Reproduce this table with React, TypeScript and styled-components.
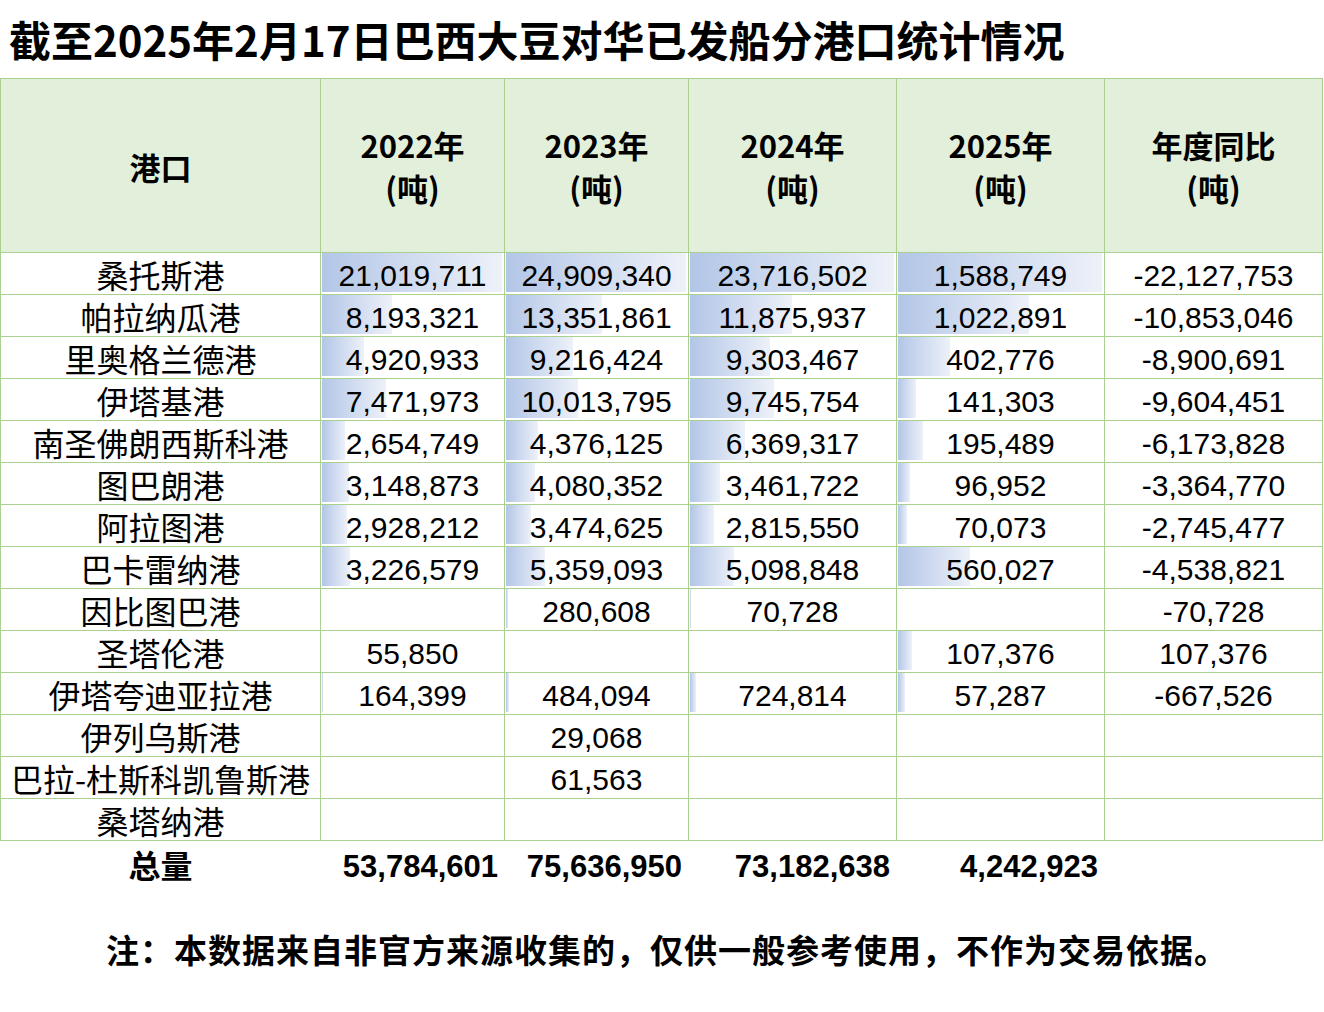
import React from 'react';
import styled, { createGlobalStyle } from 'styled-components';

const cjk = '"Noto Sans CJK SC", "Noto Sans", sans-serif';
const num = '"Liberation Sans", Arial, sans-serif';

const GlobalStyle = createGlobalStyle`
  body {
    margin: 0;
    background: #ffffff;
    color: #000000;
    font-family: ${cjk};
  }
`;

const Page = styled.div`
  width: 1324px;
  min-height: 1012px;
  background: #ffffff;
`;

const Title = styled.h1`
  margin: 0;
  height: 78px;
  line-height: 78px;
  padding-left: 9px;
  font-family: ${cjk};
  font-size: 42px;
  font-weight: 700;
  white-space: nowrap;
`;

const columns = '319px 183px 183px 207px 207px 217px';

const Table = styled.div`
  display: grid;
  grid-template-columns: ${columns};
  grid-template-rows: 173px repeat(14, 41px);
  gap: 1px;
  padding: 1px;
  width: max-content;
  background: #a9d08e;
`;

const HeadCell = styled.div`
  display: flex;
  align-items: center;
  justify-content: center;
  text-align: center;
  background: #e2efda;
  font-family: ${cjk};
  font-size: 31px;
  font-weight: 700;
  line-height: 43px;
  padding-top: 1px;
`;

const NameCell = styled.div`
  display: flex;
  align-items: center;
  justify-content: center;
  background: #ffffff;
  font-family: ${cjk};
  font-size: 32px;
  font-weight: 400;
  white-space: nowrap;
`;

const ValueCell = styled.div`
  position: relative;
  display: flex;
  align-items: center;
  justify-content: center;
  background: #ffffff;
  font-family: ${num};
  font-size: 30px;
  padding-top: 4px;
`;

const Bar = styled.div`
  position: absolute;
  left: 1px;
  top: 0;
  bottom: 2px;
  background: linear-gradient(to right, #b3c6e7, #edf1f9);
`;

const ValueText = styled.span`
  position: relative;
`;

const TotalRow = styled.div`
  display: grid;
  grid-template-columns: ${columns};
  column-gap: 1px;
  padding: 0 1px;
  height: 52px;
  align-items: center;
`;

const TotalLabel = styled.div`
  text-align: center;
  font-family: ${cjk};
  font-size: 32px;
  font-weight: 700;
  padding-bottom: 6px;
`;

const TotalValue = styled.div`
  text-align: right;
  padding-right: 6px;
  font-family: ${num};
  font-size: 31px;
  font-weight: 700;
`;

const Note = styled.p`
  margin: 0;
  padding: 34px 0 0 10px;
  line-height: 44px;
  text-align: center;
  font-family: ${cjk};
  font-size: 33px;
  font-weight: 700;
  letter-spacing: 1px;
`;

type Row = [string, number | null, number | null, number | null, number | null, string];

const rows: Row[] = [
  ['桑托斯港', 21019711, 24909340, 23716502, 1588749, '-22,127,753'],
  ['帕拉纳瓜港', 8193321, 13351861, 11875937, 1022891, '-10,853,046'],
  ['里奥格兰德港', 4920933, 9216424, 9303467, 402776, '-8,900,691'],
  ['伊塔基港', 7471973, 10013795, 9745754, 141303, '-9,604,451'],
  ['南圣佛朗西斯科港', 2654749, 4376125, 6369317, 195489, '-6,173,828'],
  ['图巴朗港', 3148873, 4080352, 3461722, 96952, '-3,364,770'],
  ['阿拉图港', 2928212, 3474625, 2815550, 70073, '-2,745,477'],
  ['巴卡雷纳港', 3226579, 5359093, 5098848, 560027, '-4,538,821'],
  ['因比图巴港', null, 280608, 70728, null, '-70,728'],
  ['圣塔伦港', 55850, null, null, 107376, '107,376'],
  ['伊塔夸迪亚拉港', 164399, 484094, 724814, 57287, '-667,526'],
  ['伊列乌斯港', null, 29068, null, null, ''],
  ['巴拉-杜斯科凯鲁斯港', null, 61563, null, null, ''],
  ['桑塔纳港', null, null, null, null, ''],
];

const headers = ['2022年', '2023年', '2024年', '2025年'];
const totals = ['53,784,601', '75,636,950', '73,182,638', '4,242,923'];

// per-column max for the data bars
const maxes = [1, 2, 3, 4].map(i =>
  Math.max(...rows.map(r => (r[i] as number | null) ?? 0))
);

const fmt = (n: number) => n.toLocaleString('en-US');

export default function App() {
  return (
    <Page>
      <GlobalStyle />
      <Title>截至2025年2月17日巴西大豆对华已发船分港口统计情况</Title>
      <Table>
        <HeadCell>港口</HeadCell>
        {headers.map(h => (
          <HeadCell key={h}>
            {h}
            <br />
            (吨)
          </HeadCell>
        ))}
        <HeadCell>
          年度同比
          <br />
          (吨)
        </HeadCell>
        {rows.map(row => (
          <React.Fragment key={row[0]}>
            <NameCell>{row[0]}</NameCell>
            {[1, 2, 3, 4].map(i => {
              const v = row[i] as number | null;
              return (
                <ValueCell key={i}>
                  {v !== null && (
                    <Bar style={{ width: `calc((100% - 3px) * ${v / maxes[i - 1]})` }} />
                  )}
                  <ValueText>{v !== null ? fmt(v) : ''}</ValueText>
                </ValueCell>
              );
            })}
            <ValueCell>
              <ValueText>{row[5]}</ValueText>
            </ValueCell>
          </React.Fragment>
        ))}
      </Table>
      <TotalRow>
        <TotalLabel>总量</TotalLabel>
        {totals.map(t => (
          <TotalValue key={t}>{t}</TotalValue>
        ))}
        <div />
      </TotalRow>
      <Note>注：本数据来自非官方来源收集的，仅供一般参考使用，不作为交易依据。</Note>
    </Page>
  );
}
